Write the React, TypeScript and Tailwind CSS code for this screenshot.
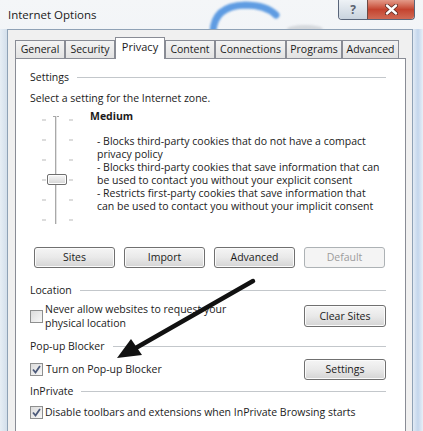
import React from "react";

const font = "font-['Open_Sans','Noto_Sans',sans-serif]";

const tabs = [
  { label: "General", w: "w-[50px]" },
  { label: "Security", w: "w-[50px]" },
  { label: "Privacy", w: "w-[50px]", active: true },
  { label: "Content", w: "w-[50px]" },
  { label: "Connections", w: "w-[71px]" },
  { label: "Programs", w: "w-[56px]" },
  { label: "Advanced", w: "w-[57px]" },
];

const Button = ({
  children,
  className = "",
  disabled = false,
}: {
  children: React.ReactNode;
  className?: string;
  disabled?: boolean;
}) => (
  <div
    className={
      "flex items-center justify-center rounded-[3px] border text-[10.5px] " +
      (disabled
        ? "border-[#adb2b5] bg-[#f4f4f4] text-[#9c9c9c] "
        : "border-[#707070] bg-gradient-to-b from-[#f5f5f5] via-[#e9e9e9] to-[#d4d4d4] text-[#1b1b1b] shadow-[inset_0_0_0_1px_#fbfbfb] ") +
      className
    }
  >
    {children}
  </div>
);

const Checkbox = ({ checked }: { checked?: boolean }) => (
  <div className="flex h-[13px] w-[13px] shrink-0 items-center justify-center border border-[#8e8f8f] bg-gradient-to-br from-[#dcdcdc] to-[#f8f8f8]">
    {checked && (
      <svg width="9" height="9" viewBox="0 0 9 9">
        <path
          d="M1 4.5 L3.5 7.5 L8 1"
          fill="none"
          stroke="#4c5a7a"
          strokeWidth="1.8"
        />
      </svg>
    )}
  </div>
);

const Group = ({ label, className = "" }: { label: string; className?: string }) => (
  <div className={"flex h-[13px] items-center " + className}>
    <span className="whitespace-nowrap">{label}</span>
    <div className="ml-[8px] h-px flex-1 bg-[#c3c7cb]" />
  </div>
);

const Slider = () => (
  <div className="relative ml-[10px] mt-[9px] h-[112px] w-[33px] shrink-0">
    <svg width="33" height="112" viewBox="0 0 33 112">
      {[6, 26, 46, 66, 86, 106].map((y) => (
        <g key={y}>
          <line x1="2" y1={y} x2="6" y2={y} stroke="#b9b9b9" strokeWidth="1" />
          <line x1="29" y1={y} x2="33" y2={y} stroke="#b9b9b9" strokeWidth="1" />
        </g>
      ))}
      <line x1="13" y1="2.5" x2="19" y2="2.5" stroke="#a8a8a8" strokeWidth="1" />
      <line x1="15.5" y1="2" x2="15.5" y2="110" stroke="#a9a9a9" strokeWidth="1" />
      <line x1="16.5" y1="2" x2="16.5" y2="110" stroke="#e2e2e2" strokeWidth="1" />
    </svg>
    <div className="absolute left-[7px] top-[60px] h-[11px] w-[20px] rounded-[2px] border border-[#6f6f6f] bg-gradient-to-b from-[#f7f7f7] to-[#d5d5d5] shadow-[inset_0_0_0_1px_#fdfdfd]" />
  </div>
);

export default function App() {
  return (
    <div
      className={
        "relative flex h-[431px] w-[423px] flex-col overflow-hidden bg-gradient-to-b from-[#f4f6f8] to-[#dfe8f1] text-[10.5px] text-[#1b1b1b] " +
        font
      }
    >
      {/* title bar */}
      <div className="relative flex h-[29px] shrink-0 items-start justify-between">
        <svg
          className="pointer-events-none absolute left-0 top-0"
          width="423"
          height="29"
          viewBox="0 0 423 29"
        >
          <defs>
            <filter id="b" x="-20%" y="-20%" width="140%" height="140%">
              <feGaussianBlur stdDeviation="1.3" />
            </filter>
          </defs>
          <path
            d="M213 32 Q 214 6 245 5 Q 266 5 276 15"
            fill="none"
            stroke="#4f93e0"
            strokeWidth="7"
            strokeLinecap="round"
            opacity="0.9"
            filter="url(#b)"
          />
          <ellipse cx="305" cy="29" rx="18" ry="4" fill="#c9cdd2" opacity="0.7" filter="url(#b)" />
        </svg>
        <span className="relative ml-[8px] mt-[7px] text-[11.5px] leading-[16px] text-[#202020]">
          Internet Options
        </span>
        <div className="relative mr-[8px] flex h-[20px] overflow-hidden rounded-b-[4px] border border-t-0 border-[#59657a]">
          <div className="flex w-[28px] items-center justify-center bg-gradient-to-b from-[#eef2f6] to-[#c9d3de] text-[12px] font-bold leading-none text-[#5a6170]">
            ?
          </div>
          <div className="flex w-[47px] items-center justify-center border-l border-[#6b4a45] bg-gradient-to-b from-[#e39a89] via-[#c4432f] to-[#d06a55]">
            <svg width="13" height="11" viewBox="0 0 13 11">
              <path
                d="M2 1.5 L11 9.5 M11 1.5 L2 9.5"
                stroke="#5b2a22"
                strokeWidth="4"
                strokeLinecap="round"
              />
              <path
                d="M2 1.5 L11 9.5 M11 1.5 L2 9.5"
                stroke="#ffffff"
                strokeWidth="2.4"
                strokeLinecap="round"
              />
            </svg>
          </div>
        </div>
      </div>

      {/* body */}
      <div className="flex flex-1">
        <div className="w-[7px] shrink-0 bg-gradient-to-r from-[#e7eef5] to-[#d3dfeb]" />
        <div className="flex-1 border-l border-r border-t border-[#8fa2b6] bg-[#f0f0f0] pl-[7px] pr-[6px] pt-[10px]">
          {/* tabs */}
          <div className="relative z-10 flex h-[18px] items-end">
            {tabs.map((t) =>
              t.active ? (
                <div
                  key={t.label}
                  className={
                    t.w +
                    " -mb-px flex h-[22px] items-start justify-center border border-b-0 border-[#898c95] bg-white pt-[2px] text-[11px] leading-[14px]"
                  }
                >
                  {t.label}
                </div>
              ) : (
                <div
                  key={t.label}
                  className={
                    t.w +
                    " flex h-[18px] items-center justify-center border border-b-0 border-[#898c95] bg-gradient-to-b from-[#f3f3f3] to-[#e3e3e3] text-[10.5px]"
                  }
                >
                  {t.label}
                </div>
              )
            )}
          </div>

          {/* panel */}
          <div className="h-[400px] border border-[#898c95] bg-white pl-[14px] pr-[19px] pt-[12px] leading-[13px]">
            <Group label="Settings" />
            <div className="mt-[8px] h-[13px]">Select a setting for the Internet zone.</div>

            <div className="flex items-start">
              <Slider />
              <div className="ml-[17px]">
                <div className="mt-[5px] h-[13px] font-bold">Medium</div>
                <div className="mt-[12px] whitespace-nowrap pl-[7px]">
                  <div>- Blocks third-party cookies that do not have a compact</div>
                  <div>privacy policy</div>
                  <div>- Blocks third-party cookies that save information that can</div>
                  <div>be used to contact you without your explicit consent</div>
                  <div>- Restricts first-party cookies that save information that</div>
                  <div>can be used to contact you without your implicit consent</div>
                </div>
              </div>
            </div>

            <div className="ml-[4px] mt-[21px] flex gap-[9px]">
              <Button className="h-[21px] w-[81px]">Sites</Button>
              <Button className="h-[21px] w-[81px]">Import</Button>
              <Button className="h-[21px] w-[81px]">Advanced</Button>
              <Button className="h-[21px] w-[81px]" disabled>
                Default
              </Button>
            </div>

            <Group label="Location" className="mt-[16px]" />
            <div className="mt-[5px] flex items-center justify-between">
              <div className="flex items-center gap-[2px]">
                <Checkbox />
                <div className="leading-[14px]">
                  <div>Never allow websites to request your</div>
                  <div>physical location</div>
                </div>
              </div>
              <Button className="h-[22px] w-[82px]">Clear Sites</Button>
            </div>

            <Group label="Pop-up Blocker" className="mt-[10px]" />
            <div className="mt-[6px] flex h-[21px] items-center justify-between">
              <div className="flex items-center gap-[3px]">
                <Checkbox checked />
                <span>Turn on Pop-up Blocker</span>
              </div>
              <Button className="h-[21px] w-[82px]">Settings</Button>
            </div>

            <Group label="InPrivate" className="mt-[5px]" />
            <div className="mt-[8px] flex h-[13px] items-center gap-[2px]">
              <Checkbox checked />
              <span>Disable toolbars and extensions when InPrivate Browsing starts</span>
            </div>
          </div>
        </div>
        <div className="w-[10px] shrink-0 bg-gradient-to-r from-[#e2ebf5] via-[#c3d6ec] to-[#e9eff6]" />
      </div>

      {/* annotation arrow */}
      <svg
        className="pointer-events-none absolute left-0 top-0"
        width="423"
        height="431"
        viewBox="0 0 423 431"
      >
        <line x1="253" y1="281" x2="134" y2="349" stroke="#111" strokeWidth="4.5" strokeLinecap="round" />
        <polygon points="117,358 131,339 142,355" fill="#111" />
      </svg>
    </div>
  );
}
